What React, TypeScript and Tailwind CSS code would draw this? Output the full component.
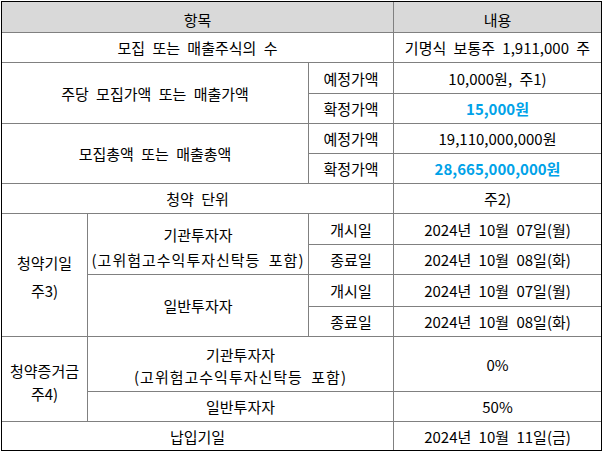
import React from "react";

const B = "border-[#808080]";

function Cell({
  className = "",
  children,
}: {
  className?: string;
  children?: React.ReactNode;
}) {
  return (
    <div
      className={`flex flex-col items-center justify-center text-center ${B} ${className}`}
    >
      {children}
    </div>
  );
}

const blue = "text-[#00a2e8] font-bold";

export default function App() {
  return (
    <div className="w-[603px] h-[452px] bg-white pl-px pt-px">
      <div
        className="w-[601px] h-[450px] border border-black grid text-[15px] text-black leading-none [word-spacing:4px]"
        style={{
          fontFamily: '"Noto Sans CJK KR", "Liberation Sans", sans-serif',
        }}
      >
        <div className="grid grid-cols-[86px_221px_85px_207px] grid-rows-[31px_30px_31px_30px_30px_30px_30px_31px_30px_32px_30px_55px_30px_28px]">
          {/* header */}
          <Cell className="col-span-3 border-r border-b bg-[#d9d9d9] pt-[5px]">항목</Cell>
          <Cell className="border-b bg-[#d9d9d9] pt-[5px]">내용</Cell>

          {/* row 2 */}
          <Cell className="col-span-3 border-r border-b">모집 또는 매출주식의 수</Cell>
          <Cell className="border-b">기명식 보통주 1,911,000 주</Cell>

          {/* rows 3-4 */}
          <Cell className="col-span-2 row-span-2 border-r border-b">
            주당 모집가액 또는 매출가액
          </Cell>
          <Cell className="border-r border-b">예정가액</Cell>
          <Cell className="border-b">10,000원, 주1)</Cell>
          <Cell className="border-r border-b">확정가액</Cell>
          <Cell className={`border-b ${blue}`}>15,000원</Cell>

          {/* rows 5-6 */}
          <Cell className="col-span-2 row-span-2 border-r border-b">
            모집총액 또는 매출총액
          </Cell>
          <Cell className="border-r border-b">예정가액</Cell>
          <Cell className="border-b">19,110,000,000원</Cell>
          <Cell className="border-r border-b">확정가액</Cell>
          <Cell className={`border-b ${blue}`}>28,665,000,000원</Cell>

          {/* row 7 */}
          <Cell className="col-span-3 border-r border-b">청약 단위</Cell>
          <Cell className="border-b">주2)</Cell>

          {/* rows 8-11 */}
          <Cell className="row-span-4 border-r border-b leading-[28px] pt-[4px]">
            <span>청약기일</span>
            <span>주3)</span>
          </Cell>
          <Cell className="row-span-2 border-r border-b leading-[25px] pt-[6px]">
            <span>기관투자자</span>
            <span className="tracking-[1px]">(고위험고수익투자신탁등 포함)</span>
          </Cell>
          <Cell className="border-r border-b">개시일</Cell>
          <Cell className="border-b">2024년 10월 07일(월)</Cell>
          <Cell className="border-r border-b">종료일</Cell>
          <Cell className="border-b">2024년 10월 08일(화)</Cell>
          <Cell className="row-span-2 border-r border-b">일반투자자</Cell>
          <Cell className="border-r border-b">개시일</Cell>
          <Cell className="border-b">2024년 10월 07일(월)</Cell>
          <Cell className="border-r border-b">종료일</Cell>
          <Cell className="border-b">2024년 10월 08일(화)</Cell>

          {/* rows 12-13 */}
          <Cell className="row-span-2 border-r border-b leading-[23px] pt-[6px]">
            <span>청약증거금</span>
            <span>주4)</span>
          </Cell>
          <Cell className="col-span-2 border-r border-b leading-[22px] pt-[3px]">
            <span>기관투자자</span>
            <span className="tracking-[1px]">(고위험고수익투자신탁등 포함)</span>
          </Cell>
          <Cell className="border-b">0%</Cell>
          <Cell className="col-span-2 border-r border-b">일반투자자</Cell>
          <Cell className="border-b">50%</Cell>

          {/* row 14 */}
          <Cell className="col-span-3 border-r">납입기일</Cell>
          <Cell>2024년 10월 11일(금)</Cell>
        </div>
      </div>
    </div>
  );
}
